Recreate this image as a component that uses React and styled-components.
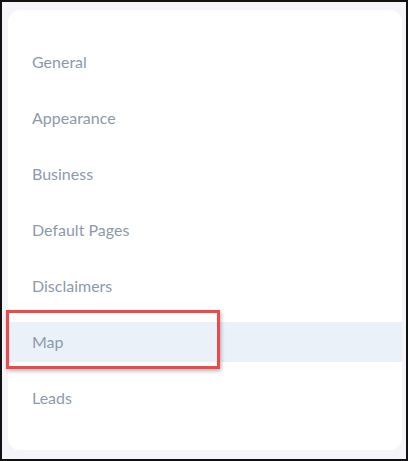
import React from 'react';
import styled, { createGlobalStyle } from 'styled-components';

const Global = createGlobalStyle`
  html, body { margin: 0; padding: 0; }
  body {
    width: 408px;
    height: 461px;
    background: #111;
    font-family: Lato, "Noto Sans", sans-serif;
  }
`;

const Frame = styled.div`
  box-sizing: border-box;
  width: 408px;
  height: 461px;
  padding: 2px;
  background: #111;
`;

const Page = styled.div`
  box-sizing: border-box;
  height: 100%;
  background: #f4f4f9;
  padding: 8px 4px 9px 6px;
`;

const Card = styled.nav`
  box-sizing: border-box;
  height: 100%;
  background: #fff;
  border-radius: 12px;
  padding: 32px 0;
  display: flex;
  flex-direction: column;
  gap: 16px;
`;

const Item = styled.div`
  position: relative;
  box-sizing: border-box;
  height: 40px;
  display: flex;
  align-items: center;
  padding: 0 0 2px 24px;
  font-size: 16px;
  color: #8d9aab;
  background: ${p => (p.$active ? '#ebf1f8' : 'transparent')};
`;

const Callout = styled.div`
  position: absolute;
  left: -2px;
  top: -12px;
  width: 214px;
  height: 59px;
  box-sizing: border-box;
  border: 3px solid #f04848;
  box-shadow: 1px 2px 4px rgba(0, 0, 0, 0.3);
  pointer-events: none;
`;

const items = ['General', 'Appearance', 'Business', 'Default Pages', 'Disclaimers', 'Map', 'Leads'];

export default function App() {
  return (
    <>
      <Global />
      <Frame>
        <Page>
          <Card>
            {items.map(name => (
              <Item key={name} $active={name === 'Map'}>
                {name}
                {name === 'Map' && <Callout />}
              </Item>
            ))}
          </Card>
        </Page>
      </Frame>
    </>
  );
}
